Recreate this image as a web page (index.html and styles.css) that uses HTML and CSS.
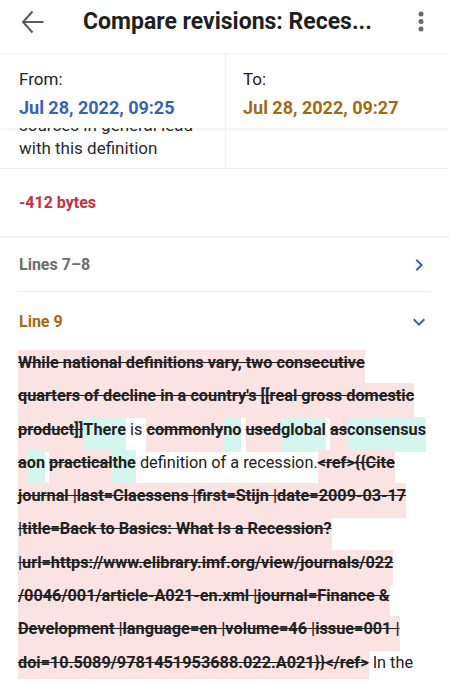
FILE: index.html
```html
<!DOCTYPE html>
<html lang="en">
<head>
<meta charset="utf-8">
<title>Compare revisions</title>
<link rel="stylesheet" href="styles.css">
</head>
<body>
<header class="toolbar">
  <svg class="back" viewBox="0 0 26 26" aria-hidden="true">
    <path d="M3.5 13H23.5M12.5 2.5L3 13l9.5 10.5" fill="none" stroke="#555a5e" stroke-width="2" stroke-linejoin="miter"/>
  </svg>
  <h1 class="title">Compare revisions: Reces...</h1>
  <svg class="more" viewBox="0 0 6 22" aria-hidden="true">
    <circle cx="3" cy="3" r="2.5" fill="#6b6b6b"/>
    <circle cx="3" cy="10.5" r="2.5" fill="#6b6b6b"/>
    <circle cx="3" cy="18" r="2.5" fill="#6b6b6b"/>
  </svg>
</header>

<section class="compare">
  <div class="rev-heads">
    <div class="rev">
      <div class="rev-label">From:</div>
      <div class="rev-date from">Jul 28, 2022, 09:25</div>
    </div>
    <div class="rev rev-right">
      <div class="rev-label">To:</div>
      <div class="rev-date to">Jul 28, 2022, 09:27</div>
    </div>
  </div>
  <div class="rev-bodies">
    <div class="summary"><p>sources in general lead with this definition</p></div>
    <div class="summary rev-right"></div>
  </div>
</section>

<div class="bytes">-412 bytes</div>

<div class="group">
  <span class="group-title muted">Lines 7–8</span>
  <svg class="chev" viewBox="0 0 24 24" aria-hidden="true"><path d="M10 6 8.59 7.41 13.17 12l-4.58 4.59L10 18l6-6z" fill="#3563b5"/></svg>
</div>
<div class="group open">
  <span class="group-title gold">Line 9</span>
  <svg class="chev" viewBox="0 0 24 24" aria-hidden="true"><path d="M16.59 8.59 12 13.17 7.41 8.59 6 10l6 6 6-6z" fill="#3563b5"/></svg>
</div>

<p class="diff"><del>While national definitions vary, two consecutive quarters of decline in a country's [[real gross domestic product]]</del><ins>There</ins> is <del>commonly</del><ins>no</ins> <del>used</del><ins>global</ins> <del>as</del><ins>consensus</ins> <del>a</del><ins>on</ins> <del>practical</del><ins>the</ins> definition of a recession.<del>&lt;ref&gt;{{Cite journal |last=Claessens |first=Stijn |date=2009-03-17 |title=Back to Basics: What Is a Recession? |url=https://www.elibrary.imf.org/view/journals/022<wbr>/0046/001/article-A021-en.xml |journal=Finance &amp; Development |language=en |volume=46 |issue=001 |<wbr>doi=10.5089/9781451953688.022.A021}}&lt;/ref&gt;</del> In the</p>
</body>
</html>
```

FILE: styles.css
```css
* { box-sizing: border-box; }

body {
  margin: 0;
  width: 449px;
  background: #fff;
  color: #202122;
  font-family: Roboto, "Noto Sans", "Liberation Sans", sans-serif;
  overflow: hidden;
}

.toolbar {
  display: flex;
  align-items: center;
  height: 53px;
  padding: 0 0 10px 20px;
  background: #fff;
  box-shadow: 0 1px 2px rgba(0, 0, 0, 0.06);
  position: relative;
  z-index: 2;
}

.back {
  width: 26px;
  height: 26px;
  flex: none;
}

.title {
  flex: 1;
  margin: 0 0 0 37px;
  font-size: 23px;
  font-weight: 700;
  line-height: 26px;
  white-space: nowrap;
  color: #1f1f1f;
}

.more {
  width: 6px;
  height: 22px;
  flex: none;
  margin-right: 25px;
}

.rev-heads {
  display: grid;
  grid-template-columns: 225px 1fr;
  background: #fff;
  position: relative;
  z-index: 1;
  box-shadow: 0 2px 3px rgba(0, 0, 0, 0.05);
}

.rev {
  padding: 14px 19px 8px;
}

.rev-right {
  border-left: 1px solid #f2f2f2;
  padding-left: 17px;
}

.rev-label {
  font-size: 17px;
  line-height: 24px;
  color: #202122;
}

.rev-date {
  margin-top: 5px;
  font-size: 18px;
  font-weight: 700;
  line-height: 24px;
}

.from { color: #3662bc; }
.to { color: #a36a14; }

.rev-bodies {
  display: grid;
  grid-template-columns: 225px 1fr;
  height: 41px;
  border-bottom: 1px solid #eeeeee;
}

.summary {
  overflow: hidden;
  padding: 0 19px;
}

.summary p {
  margin: -14px 0 0;
  font-size: 17px;
  line-height: 23px;
  color: #2a2b2c;
}

.bytes {
  padding: 24px 19px 23px;
  font-size: 16px;
  font-weight: 700;
  line-height: 20px;
  color: #c5303e;
  border-bottom: 2px solid #f2f2f2;
}

.group {
  display: flex;
  align-items: center;
  justify-content: space-between;
  margin: 0 18px;
  padding: 17px 0 16px 1px;
  border-bottom: 1px solid #eeeeee;
}

.group.open {
  padding: 20px 0 14px 1px;
  border-bottom: none;
}

.group-title {
  font-size: 16px;
  font-weight: 700;
  line-height: 20px;
}

.muted { color: #6a6e73; }
.gold { color: #a36a14; }

.chev {
  width: 24px;
  height: 24px;
  margin: -2px 0;
}

.diff {
  margin: 0;
  padding: 0 21px 0 18px;
  font-size: 16.3px;
  line-height: 33.3px;
  color: #202122;
}

.diff del,
.diff ins {
  font-weight: 700;
  padding: 3px 0 13px;
}

.diff del {
  background: #fce3e3;
  text-decoration: line-through;
}

.diff ins {
  background: #d5f6ee;
  text-decoration: none;
}
```
